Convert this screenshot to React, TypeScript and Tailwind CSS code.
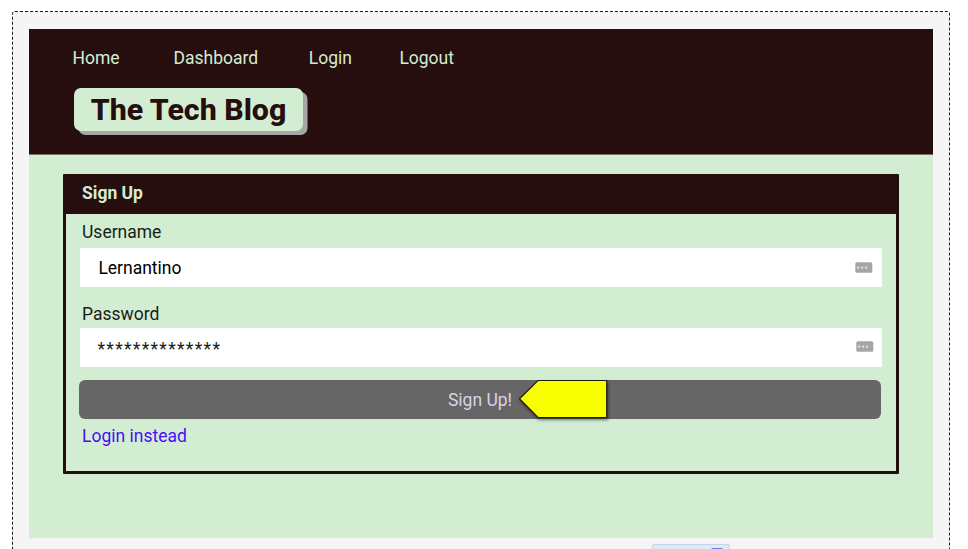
const navItems = [
  { label: 'Home', cell: 'w-[101px]' },
  { label: 'Dashboard', cell: 'w-[135.3px]' },
  { label: 'Login', cell: 'w-[90.6px]' },
  { label: 'Logout', cell: 'w-[70px]' },
];

function FieldBadge() {
  return (
    <svg width="18" height="11" viewBox="0 0 18 11" aria-hidden="true">
      <rect x="0.3" y="0.2" width="17" height="10.6" rx="1.5" fill="#a6a6a6" />
      <rect x="2.2" y="4.6" width="2" height="2" fill="#e4e4e4" />
      <rect x="6.2" y="4.6" width="2" height="2" fill="#e4e4e4" />
      <rect x="10.2" y="4.6" width="2" height="2" fill="#e4e4e4" />
    </svg>
  );
}

function Arrow() {
  return (
    <svg className="absolute left-[436px] -top-[4px]" width="100" height="50" viewBox="0 0 100 50" aria-hidden="true">
      <path
        d="M4.5 22.7 L23 4.5 H91.7 V41.5 H23 Z"
        fill="#faff00"
        stroke="#1c1c14"
        strokeWidth="1.2"
        className="drop-shadow-[1px_2px_1.5px_rgba(0,0,0,0.5)]"
      />
    </svg>
  );
}

export default function App() {
  return (
    <div className="h-[549px] w-[968px] overflow-hidden bg-white pl-[12px] pt-[11px] font-['Roboto',sans-serif] text-[17.5px]">
      <div className="h-[560px] w-[938px] rounded-[3px] border border-dashed border-[#1d1d1d] bg-[#f5f5f5] pl-[16px] pt-[17px]">
        <div className="h-[509px] w-[904px] bg-[#d3edd3]">
          <header className="h-[126px] border-b border-[#806e69] bg-[#260e0f] pl-[43.5px] pt-[19px]">
            <nav className="flex h-5 leading-5 text-[#d3edd3]">
              {navItems.map((item) => (
                <a key={item.label} className={item.cell}>{item.label}</a>
              ))}
            </nav>
            <h1 className="ml-[1.5px] mt-[19.5px] flex h-[43.5px] w-[229px] items-center justify-center rounded-[7px] bg-[#d3edd3] pt-px text-[30.3px] font-extrabold leading-none text-[#260e0f] shadow-[4.5px_4px_0_#a6a6a6]">
              The Tech Blog
            </h1>
          </header>
          <main className="pl-[34px] pt-[19px]">
            <section className="h-[300px] w-[836px] rounded-[1px] border-[3px] border-[#260e0f] text-[#171d17]">
              <h2 className="h-[37px] bg-[#260e0f] pl-[16px] pt-[6px] font-bold leading-5 text-[#d3edd3]">Sign Up</h2>
              <form className="pl-[13px] pt-[8px]">
                <label className="block h-[26px] pl-[3px] leading-5">Username</label>
                <div className="ml-[1.4px] flex h-[38.5px] w-[802px] items-center justify-between bg-white pl-[18px] pr-[9px] text-black">
                  <span className="pt-px">Lernantino</span>
                  <FieldBadge />
                </div>
                <label className="mt-[17px] block h-[24.5px] pl-[3px] leading-5">Password</label>
                <div className="ml-[1px] flex h-[38.5px] w-[801.5px] items-center justify-between bg-white pl-[17.5px] pr-[8px]">
                  <span className="pt-1 tracking-[1.3px]">**************</span>
                  <span className="flex pb-[2px]"><FieldBadge /></span>
                </div>
                <div className="relative mt-[13.5px] flex h-[38.5px] w-[802px] items-center justify-center rounded-[6px] bg-[#666666] pt-px text-[#d9d3e5]">
                  Sign Up!
                  <Arrow />
                </div>
                <a className="mt-[7px] block pl-[3px] leading-5 text-[#4a0df5]">Login instead</a>
              </form>
            </section>
          </main>
        </div>
        <div className="ml-[623px] mt-[6px] h-[20px] w-[78px] rounded-[2px] border border-[#c5d5e3] bg-[#deebf5] pl-[58px] pt-[3px]">
          <div className="h-3 w-3 rounded-[2px] bg-[#6f7cf2]" />
        </div>
      </div>
    </div>
  );
}
